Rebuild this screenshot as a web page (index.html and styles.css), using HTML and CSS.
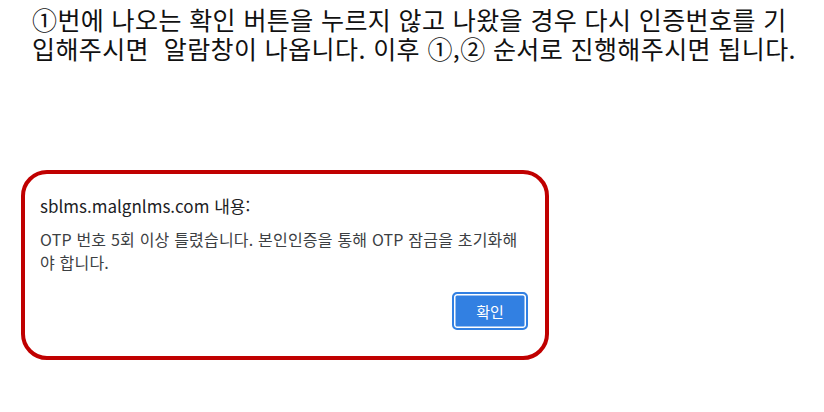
FILE: index.html
```html
<!DOCTYPE html>
<html lang="ko">
<head>
<meta charset="utf-8">
<link rel="stylesheet" href="styles.css">
</head>
<body>
<p class="note">①번에 나오는 확인 버튼을 누르지 않고 나왔을 경우 다시 인증번호를 기<br>입해주시면&nbsp; 알람창이 나옵니다. 이후 ①,② 순서로 진행해주시면 됩니다.</p>
<div class="frame">
  <div class="dialog">
    <div class="title">sblms.malgnlms.com 내용:</div>
    <div class="msg">OTP 번호 5회 이상 틀렸습니다. 본인인증을 통해 OTP 잠금을 초기화해<br>야 합니다.</div>
    <div class="actions"><button class="ok">확인</button></div>
  </div>
</div>
</body>
</html>
```
FILE: styles.css
```css
html, body {
  margin: 0;
  padding: 0;
  background: #ffffff;
}
body {
  font-family: "Noto Sans CJK KR", "Noto Sans", sans-serif;
  color: #000;
}
.note {
  margin: 0;
  padding: 5px 0 0 32px;
  height: 65px;
  font-size: 25px;
  line-height: 29px;
  letter-spacing: 0.4px;
  white-space: nowrap;
  color: #111;
}
.frame {
  margin: 100px 0 0 21px;
  width: 520px;
  height: 182px;
  border: 4px solid #c00000;
  border-radius: 26px;
  box-sizing: content-box;
}
.dialog {
  padding: 20px 17px 0 15px;
}
.title {
  font-size: 17px;
  line-height: 24px;
  color: #202124;
}
.msg {
  margin-top: 10px;
  font-size: 16px;
  line-height: 23px;
  color: #3c4043;
  letter-spacing: 0.2px;
}
.actions {
  display: flex;
  justify-content: flex-end;
  margin-top: 18px;
}
.ok {
  width: 76px;
  height: 38px;
  border: 2px solid #3280e2;
  border-radius: 5px;
  background: #3280e2;
  box-shadow: inset 0 0 0 1.5px #ffffff;
  color: #ffffff;
  font-family: "Noto Sans CJK KR", sans-serif;
  font-size: 15px;
  padding: 0;
}
```
